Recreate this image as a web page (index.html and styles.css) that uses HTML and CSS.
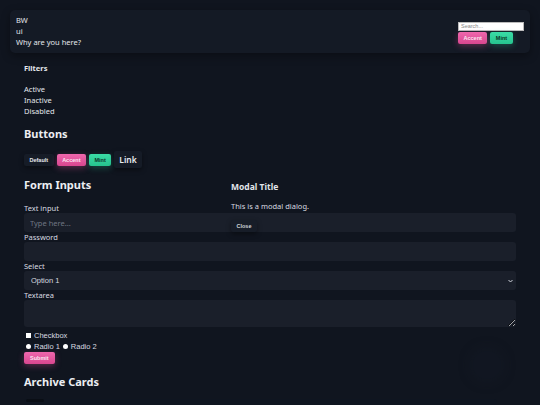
FILE: index.html
```html
<!DOCTYPE html>
<html lang="en">
<head>
  <meta charset="UTF-8">
  <meta name="viewport" content="width=device-width, initial-scale=1.0">
  <title>BW ui</title>
  <link rel="stylesheet" href="styles.css">
</head>
<body>

  <header class="topbar">
    <div class="brand">
      <div>BW</div>
      <div>ui</div>
      <div>Why are you here?</div>
    </div>
    <div class="top-actions">
      <input type="text" class="search" placeholder="Search...">
      <div class="btn-row tight">
        <button class="btn accent">Accent</button>
        <button class="btn mint">Mint</button>
      </div>
    </div>
  </header>

  <main class="content">
    <section class="filters">
      <h4>Filters</h4>
      <ul>
        <li>Active</li>
        <li>Inactive</li>
        <li>Disabled</li>
      </ul>
    </section>

    <section>
      <h2>Buttons</h2>
      <div class="btn-row">
        <button class="btn">Default</button>
        <button class="btn accent">Accent</button>
        <button class="btn mint">Mint</button>
        <button class="btn link">Link</button>
      </div>
    </section>

    <section class="form-section">
      <h2>Form Inputs</h2>
      <form class="demo-form">
        <label>Text input</label>
        <input type="text" class="field" placeholder="Type here...">
        <label>Password</label>
        <input type="password" class="field">
        <label>Select</label>
        <select class="field">
          <option>Option 1</option>
        </select>
        <label>Textarea</label>
        <textarea class="field area"></textarea>
        <div class="check-line first"><span class="box"></span>Checkbox</div>
        <div class="check-line"><span class="dot"></span>Radio 1 <span class="dot"></span>Radio 2</div>
        <button type="button" class="btn accent">Submit</button>
      </form>
    </section>

    <section class="archive">
      <h2>Archive Cards</h2>
      <div class="card"><span class="card-tag"></span></div>
    </section>
  </main>

  <div class="modal">
    <h3>Modal Title</h3>
    <p>This is a modal dialog.</p>
    <button class="btn">Close</button>
  </div>

  <div class="fab"></div>

</body>
</html>
```

FILE: styles.css
```css
body {
  margin: 0;
  padding: 10px;
  background-color: #10151f;
  color: #e4e7ec;
  font-family: 'Noto Sans', sans-serif;
  font-size: 7.5px;
  line-height: 11px;
  position: relative;
  height: 385px;
  overflow: hidden;
}
.topbar {
  display: flex;
  justify-content: space-between;
  align-items: center;
  background: #141a25;
  border-radius: 5px;
  padding: 5px 6px;
  box-shadow: 0 3px 8px rgba(0, 0, 0, 0.35);
}
.top-actions {
  display: flex;
  flex-direction: column;
  align-items: flex-start;
  gap: 1px;
  margin-top: 2px;
}
.search {
  width: 66px;
  height: 9px;
  box-sizing: border-box;
  border: 1px solid #bbb;
  padding: 0 2px;
  font-family: 'Liberation Sans', sans-serif;
  font-size: 5.5px;
  background: white;
}
.search::placeholder {
  color: #888;
}
.content {
  padding: 0 14px;
}
.filters {
  margin-top: 10px;
}
h4 {
  margin: 0 0 10px;
  font-size: 7.5px;
  font-weight: bold;
}
ul {
  list-style: none;
  margin: 0;
  padding: 0;
}
h2 {
  margin: 0;
  font-size: 11px;
  line-height: 15px;
  font-weight: bold;
  color: #eceef2;
}
section h2 {
  margin-top: 9px;
}
.btn-row {
  display: flex;
  align-items: center;
  gap: 3px;
  margin-top: 10px;
}
.btn-row.tight {
  margin-top: 0;
}
.btn {
  height: 12px;
  padding: 0 5.5px;
  border: none;
  border-radius: 2px;
  background: #161c27;
  color: #e4e7ec;
  font-family: 'Liberation Sans', sans-serif;
  font-size: 5.5px;
  font-weight: bold;
  box-shadow: 0 2px 5px rgba(0, 0, 0, 0.4);
  cursor: pointer;
}
.btn.accent {
  background: linear-gradient(180deg, #ef67ad, #d9468f);
  color: #fbe6f1;
  box-shadow: 0 2px 6px rgba(229, 80, 155, 0.35);
}
.btn.mint {
  background: linear-gradient(180deg, #3bdca6, #26c48e);
  color: #0c3526;
  box-shadow: 0 2px 6px rgba(40, 200, 145, 0.3);
}
.btn.link {
  height: 17px;
  padding: 0 5px;
  font-family: 'Noto Sans', sans-serif;
  font-size: 8.5px;
  font-weight: 600;
  color: #e8ebef;
  background: #151b26;
}
.form-section h2 {
  margin-top: 9px;
}
.demo-form {
  display: flex;
  flex-direction: column;
  align-items: flex-start;
  margin-top: 11px;
}
.demo-form label {
  display: block;
  line-height: 10px;
  color: #d8dbe0;
}
.field {
  width: 100%;
  height: 19px;
  box-sizing: border-box;
  margin: 0;
  border: none;
  border-radius: 3px;
  background: #1a1f2a;
  color: #cfd3da;
  padding: 0 6px;
  font-family: 'Noto Sans', sans-serif;
  font-size: 7.5px;
}
.field::placeholder {
  color: #6f7683;
}
select.field {
  appearance: none;
  padding-left: 7px;
  font-family: 'Liberation Sans', sans-serif;
  color: #d8dbe0;
  background: #1a1f2a url("data:image/svg+xml,%3Csvg xmlns='http://www.w3.org/2000/svg' width='5' height='4' viewBox='0 0 5 4'%3E%3Cpath d='M0.5 1 L2.5 3 L4.5 1' fill='none' stroke='%23cfd3da' stroke-width='1'/%3E%3C/svg%3E") no-repeat right 3px center;
}
.field.area {
  height: 27px;
  resize: vertical;
}
.check-line {
  display: flex;
  align-items: center;
  gap: 3px;
  margin-left: 2px;
  font-family: 'Liberation Sans', sans-serif;
  color: #d8dbe0;
}
.check-line.first {
  margin-top: 3px;
}
.box {
  width: 5px;
  height: 5px;
  background: white;
}
.dot {
  width: 5px;
  height: 5px;
  border-radius: 50%;
  background: white;
}
.demo-form .btn.accent {
  margin-top: 0;
  padding: 0 6px;
}
.archive h2 {
  margin-top: 10px;
}
.card {
  height: 20px;
  margin-top: 10px;
  width: 473px;
  background: #0f1520;
  border-radius: 3px;
  position: relative;
}
.card-tag {
  position: absolute;
  left: 2px;
  top: 0;
  width: 18px;
  height: 3px;
  background: #0a0e15;
  border-radius: 2px;
}
.modal {
  position: absolute;
  left: 231px;
  top: 181px;
}
.modal h3 {
  margin: 0;
  font-size: 8.5px;
  line-height: 12px;
  font-weight: bold;
  color: #e2e5ea;
}
.modal p {
  margin: 8px 0 8px;
  color: #d8dbe0;
}
.modal .btn {
  background: #171d28;
  color: #d0d4da;
}
.fab {
  position: absolute;
  left: 473px;
  top: 351px;
  width: 28px;
  height: 28px;
  border-radius: 50%;
  background: #121824;
  box-shadow: 0 0 10px 4px rgba(24, 30, 42, 0.5);
  opacity: 0.5;
}
```
